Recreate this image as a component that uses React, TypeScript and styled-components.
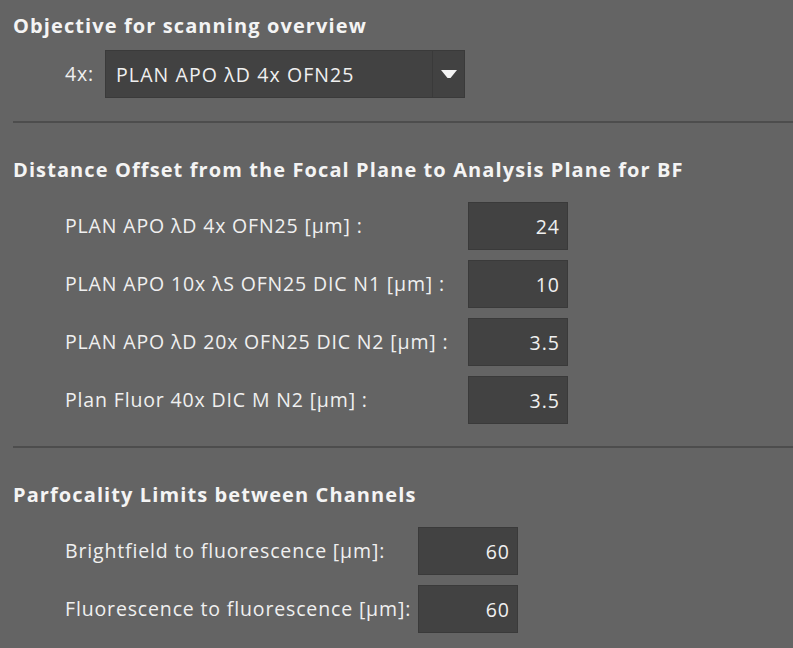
import { Fragment } from 'react';
import styled, { createGlobalStyle } from 'styled-components';

const GlobalStyle = createGlobalStyle`
  html, body {
    margin: 0;
    padding: 0;
    background: #646464;
  }
  body {
    font-family: "Open Sans", "Noto Sans", sans-serif;
    color: #f2f2f2;
  }
`;

const Page = styled.div`
  width: 793px;
  height: 648px;
  overflow: hidden;
  background: #646464;
  box-sizing: border-box;
  padding-top: 12px;
`;

const Section = styled.section<{ $gap?: number }>`
  padding-left: 13px;
  margin-top: ${(p) => p.$gap ?? 0}px;
`;

const Heading = styled.h2`
  margin: 0;
  font-size: 20px;
  font-weight: 700;
  line-height: 28px;
  color: #f4f4f4;
  letter-spacing: 1.1px;
`;

const Divider = styled.hr`
  margin: 0;
  border: none;
  height: 2px;
  background: #4d4d4d;
`;

const SelectRow = styled.div`
  display: flex;
  align-items: center;
  gap: 11px;
  margin: 10px 0 23px 52px;
`;

const Label = styled.span`
  font-size: 19.5px;
  line-height: 26px;
  letter-spacing: 0.85px;
  color: #f0f0f0;
  white-space: nowrap;
`;

const Select = styled.div`
  display: flex;
  width: 360px;
  height: 48px;
  box-sizing: border-box;
  background: #424242;
  border: 1px solid #3a3a3a;
`;

const SelectValue = styled.div`
  flex: 1;
  display: flex;
  align-items: center;
  padding-left: 10px;
  font-size: 19.5px;
  letter-spacing: 1.1px;
  color: #f0f0f0;
`;

const ArrowBox = styled.div`
  width: 31px;
  border-left: 1px solid #3a3a3a;
  display: flex;
  align-items: center;
  justify-content: center;
`;

const FieldGrid = styled.div<{ $labelCol: number }>`
  display: grid;
  grid-template-columns: ${(p) => p.$labelCol}px 100px;
  column-gap: 11px;
  row-gap: 10px;
  align-items: center;
  justify-content: start;
  margin: 18px 0 22px 52px;
`;

const NumberBox = styled.div`
  height: 48px;
  box-sizing: border-box;
  background: #424242;
  border: 1px solid #3a3a3a;
  display: flex;
  align-items: center;
  justify-content: flex-end;
  padding-right: 7px;
  font-size: 19.5px;
  letter-spacing: 1px;
  color: #f0f0f0;
`;

const offsets = [
  { label: 'PLAN APO λD 4x OFN25 [μm] :', value: '24' },
  { label: 'PLAN APO 10x λS OFN25 DIC N1 [μm] :', value: '10' },
  { label: 'PLAN APO λD 20x OFN25 DIC N2 [μm] :', value: '3.5' },
  { label: 'Plan Fluor 40x DIC M N2 [μm] :', value: '3.5' },
];

const limits = [
  { label: 'Brightfield to fluorescence [μm]:', value: '60' },
  { label: 'Fluorescence to fluorescence [μm]:', value: '60' },
];

type Row = { label: string; value: string };

function Fields({ rows, labelCol }: { rows: Row[]; labelCol: number }) {
  return (
    <FieldGrid $labelCol={labelCol}>
      {rows.map((r) => (
        <Fragment key={r.label}>
          <Label>{r.label}</Label>
          <NumberBox>{r.value}</NumberBox>
        </Fragment>
      ))}
    </FieldGrid>
  );
}

export default function App() {
  return (
    <>
      <GlobalStyle />
      <Page>
        <Section>
          <Heading>Objective for scanning overview</Heading>
          <SelectRow>
            <Label>4x:</Label>
            <Select>
              <SelectValue>PLAN APO λD 4x OFN25</SelectValue>
              <ArrowBox>
                <svg width="16" height="9" viewBox="0 0 16 9">
                  <path d="M0 0 H16 L9.5 8 H6.5 Z" fill="#f4f4f4" />
                </svg>
              </ArrowBox>
            </Select>
          </SelectRow>
          <Divider />
        </Section>

        <Section $gap={33}>
          <Heading>Distance Offset from the Focal Plane to Analysis Plane for BF</Heading>
          <Fields rows={offsets} labelCol={392} />
          <Divider />
        </Section>

        <Section $gap={33}>
          <Heading>Parfocality Limits between Channels</Heading>
          <Fields rows={limits} labelCol={342} />
        </Section>
      </Page>
    </>
  );
}
